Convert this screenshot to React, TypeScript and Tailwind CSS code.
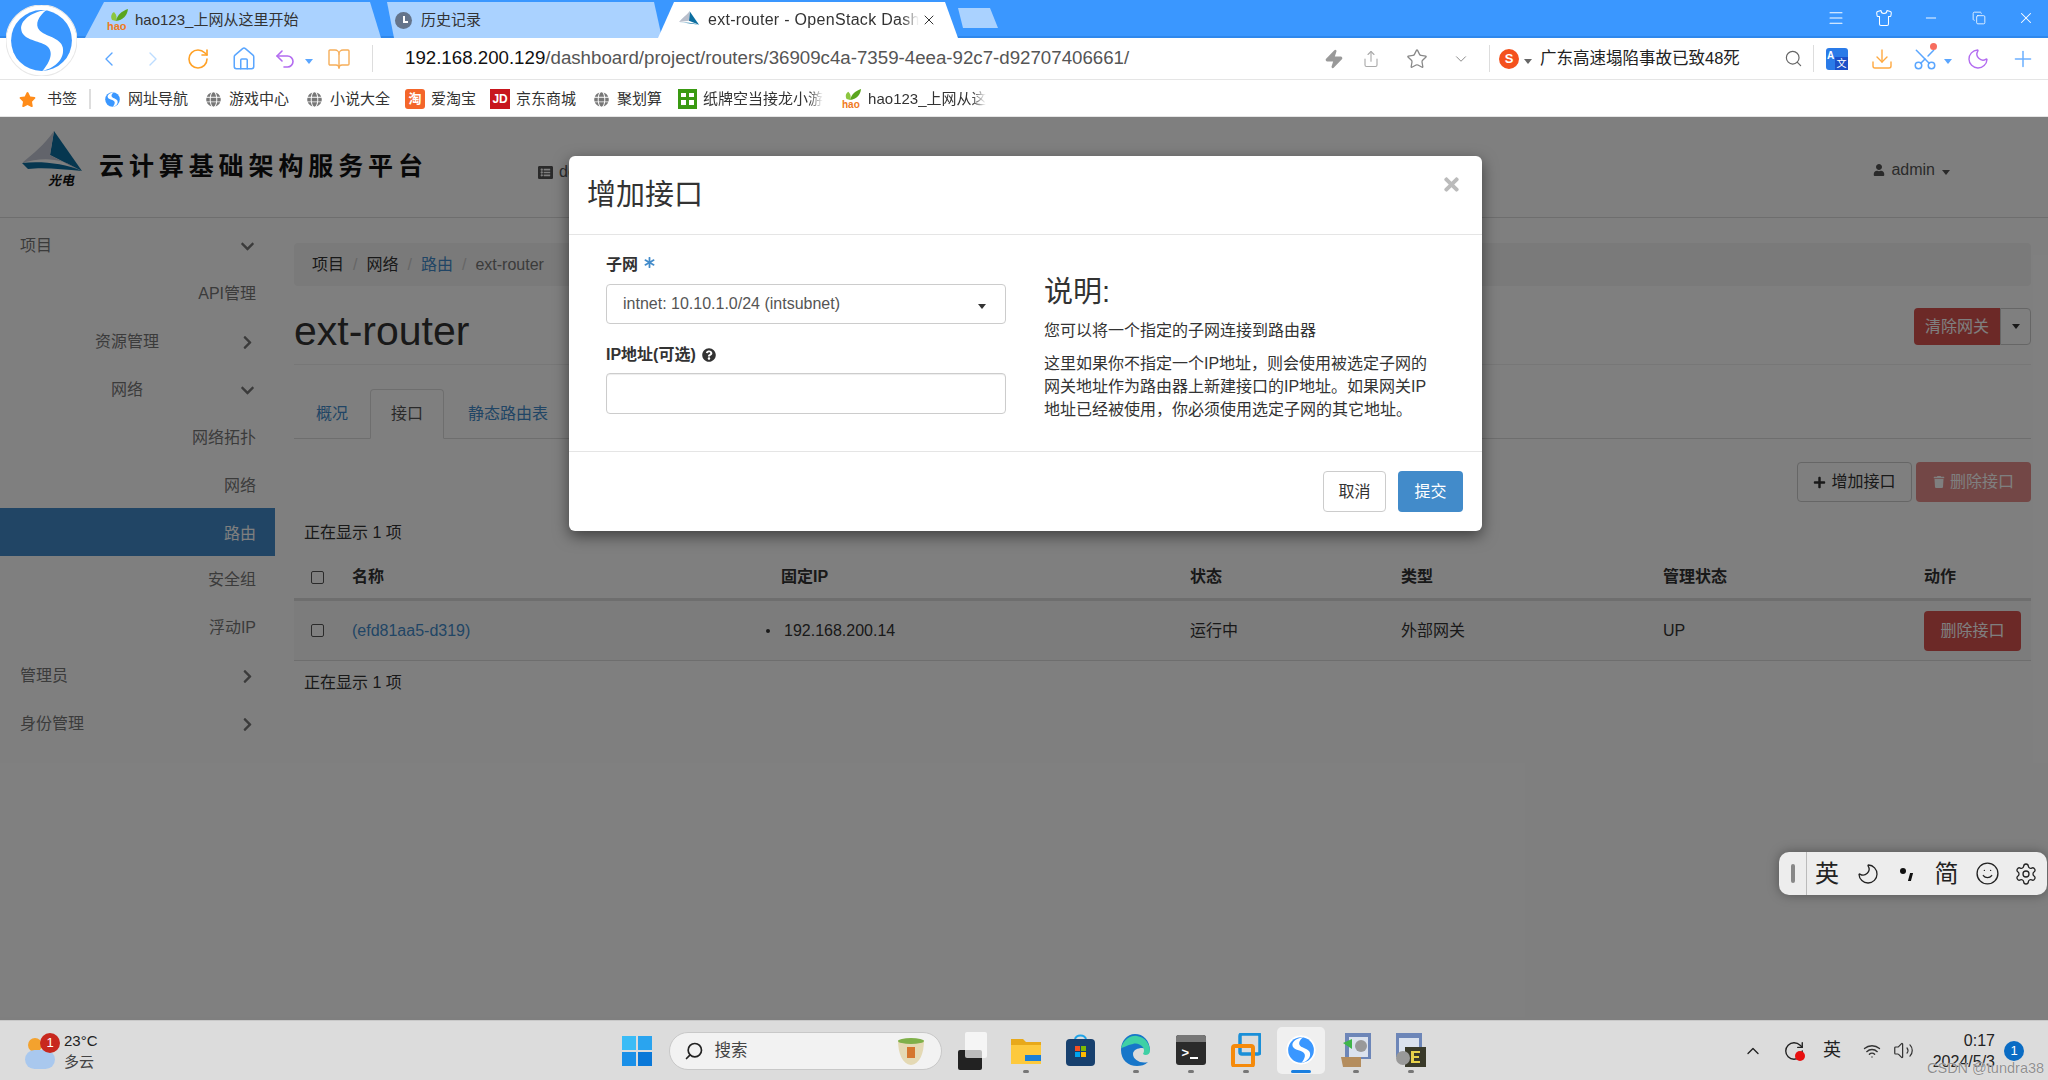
import { ReactNode } from "react";
import {
  FaAsterisk, FaChevronDown, FaChevronRight, FaGlobe, FaListAlt, FaPlus, FaQuestionCircle,
  FaStar, FaTimes, FaTrash, FaUser,
} from "react-icons/fa";
import {
  ChevronDown, ChevronLeft, ChevronRight, ChevronUp, Download, Home, Menu, Minus, Moon, Plus,
  RotateCw, Scissors, Search, Settings, Share, Shirt, Smile, Star, Undo2, Volume2, Wifi, X, Zap, BookOpen, Copy,
} from "lucide-react";

function SogouLogo({ size, ring }: { size: number; ring?: boolean }) {
  return (
    <svg width={size} height={size} viewBox="0 0 70 70">
      {ring && <circle cx="35" cy="35" r="35" fill="#fff" stroke="#e8e8e8" />}
      <circle cx="35" cy="35" r="30" fill="#3a97ff" />
      <path d="M40 5 C24 7 14 16 15 24 C16 34 30 35 38 39 C46 43 47 52 36 65 C50 62 58 52 56 42 C54 32 38 31 33 25 C28 19 32 11 40 5Z" fill="#fff" />
    </svg>
  );
}

function HaoIcon() {
  return (
    <svg width="22" height="24" viewBox="0 0 22 24">
      <path d="M5 12 C3 8 5 5 7 4 C10 7 10 10 9 13Z" fill="#8cc63f" />
      <path d="M9 13 C10 7 15 3 21 1 C20 8 16 12 9 13Z" fill="#5aa51e" />
      <text x="0" y="22" fontSize="11" fontWeight="700" fill="#f07a22" fontFamily="Liberation Sans">hao</text>
    </svg>
  );
}

function OpenStackIcon() {
  return (
    <svg width="20" height="22" viewBox="0 0 60 52">
      <path d="M32 0 L60 40 L30 28Z" fill="#0c6ea0" />
      <path d="M32 0 L30 28 L0 32 C8 22 20 14 32 0Z" fill="#b9bfcc" />
      <path d="M0 32 L60 40 C40 34 20 34 0 32Z" fill="#0c6ea0" />
    </svg>
  );
}

function Mark({ w, children }: { w: number; children: ReactNode }) {
  return <div className="flex shrink-0 items-center justify-center" style={{ width: w }}>{children}</div>;
}

function Caret({ color = "#666" }: { color?: string }) {
  return <span className="inline-block h-0 w-0 border-x-[4px] border-t-[5px] border-x-transparent" style={{ borderTopColor: color }} />;
}

function Bookmark({ icon, text, w, fade }: { icon: ReactNode; text: string; w?: number; fade?: boolean }) {
  return (
    <div className="flex items-center">
      <Mark w={20}>{icon}</Mark>
      <span
        className={`ml-[6px] whitespace-nowrap text-[15px] text-[#333] ${fade ? "[mask-image:linear-gradient(90deg,#000_88%,transparent)]" : ""}`}
        style={w ? { width: w } : undefined}
      >
        {text}
      </span>
    </div>
  );
}

function Tabs() {
  return (
    <div className="relative flex h-[38px] shrink-0 bg-[#3a97ff]">
      <div className="absolute inset-x-0 bottom-0 h-[2px] bg-[#2f88ec]" />
      <div className="relative ml-[85px] mt-[2px] flex h-[36px] w-[296px] items-center bg-[#aad2ff] pl-[22px] [clip-path:polygon(19px_0,285px_0,100%_100%,0_100%)]">
        <HaoIcon />
        <span className="ml-[6px] whitespace-nowrap text-[15px] text-[#333]">hao123_上网从这里开始</span>
      </div>
      <div className="relative ml-[6px] mt-[2px] flex h-[36px] w-[275px] items-center bg-[#aad2ff] pl-[8px] [clip-path:polygon(0_0,267px_0,100%_100%,7px_100%)]">
        <div className="flex h-[17px] w-[17px] items-center justify-center rounded-full bg-[#64748b]">
          <span className="mb-[2px] ml-[3px] h-[7px] w-[5px] border-b-2 border-l-2 border-white" />
        </div>
        <span className="ml-[9px] text-[15px] text-[#333]">历史记录</span>
      </div>
      <div className="relative -ml-[4px] mt-[2px] flex h-[36px] w-[300px] items-center bg-white pl-[21px] [clip-path:polygon(16px_0,287px_0,100%_100%,0_100%)]">
        <OpenStackIcon />
        <span className="ml-[9px] w-[211px] whitespace-nowrap text-[16px] tracking-[0.3px] text-[#333] [mask-image:linear-gradient(90deg,#000_92%,transparent)]">ext-router - OpenStack Dash</span>
        <X size={16} strokeWidth={1.5} className="ml-[2px] text-[#333]" />
      </div>
      <div className="relative mt-[8px] h-[20px] w-[40px] bg-[#aad2ff] [clip-path:polygon(0_0,32px_0,100%_100%,5px_100%)]" />
      <div className="relative -mr-[2px] ml-auto flex h-[36px] items-center text-white">
        <div className="flex w-[47.5px] justify-center"><Menu size={18} strokeWidth={1.4} /></div>
        <div className="flex w-[47.5px] justify-center"><Shirt size={18} strokeWidth={1.4} /></div>
        <div className="flex w-[47.5px] justify-center"><Minus size={16} strokeWidth={1.4} /></div>
        <div className="flex w-[47.5px] justify-center"><Copy size={14} strokeWidth={1.4} /></div>
        <div className="flex w-[47.5px] justify-center"><X size={18} strokeWidth={1.4} /></div>
      </div>
    </div>
  );
}

function Toolbar() {
  return (
    <div className="flex h-[42px] shrink-0 items-center border-b border-[#e5e5e5] bg-white pl-[97px]">
      <Mark w={24}><ChevronLeft size={24} strokeWidth={1.4} className="text-[#5aa6ff]" /></Mark>
      <div className="ml-[20px]"><Mark w={24}><ChevronRight size={24} strokeWidth={1.4} className="text-[#bcdcff]" /></Mark></div>
      <div className="ml-[21px]"><RotateCw size={24} strokeWidth={1.6} className="text-[#ffa126]" /></div>
      <div className="ml-[21px]"><Home size={26} strokeWidth={1.4} className="text-[#5aa6ff]" /></div>
      <div className="ml-[16px]"><Undo2 size={24} strokeWidth={1.6} className="text-[#b36cf0]" /></div>
      <div className="ml-[8px]"><Caret color="#5aa6ff" /></div>
      <div className="ml-[14px]"><BookOpen size={24} strokeWidth={1.4} className="text-[#f6ae5a]" /></div>
      <div className="ml-[21px] h-[27px] w-px bg-[#ddd]" />
      <div className="ml-[32px] w-[917px] whitespace-nowrap text-[18.7px] text-[#555]">
        <span className="text-[#111]">192.168.200.129</span>/dashboard/project/routers/36909c4a-7359-4eea-92c7-d92707406661/
      </div>
      <Zap size={20} className="ml-[2px] fill-[#999] text-[#999]" />
      <Share size={18} strokeWidth={1.5} className="ml-[18px] text-[#aaa]" />
      <Star size={22} strokeWidth={1.4} className="ml-[26px] text-[#888]" />
      <ChevronDown size={18} strokeWidth={1.3} className="ml-[24px] text-[#888]" />
      <div className="ml-[19px] h-[27px] w-px bg-[#ddd]" />
      <div className="ml-[9px] flex h-[20px] w-[20px] items-center justify-center rounded-full border-2 border-[#f4511e] bg-[#f4511e] text-[13px] font-bold text-white">S</div>
      <div className="ml-[5px]"><Caret /></div>
      <span className="ml-[8px] w-[244px] text-[16.5px] text-[#222]">广东高速塌陷事故已致48死</span>
      <Search size={19} strokeWidth={1.5} className="text-[#666]" />
      <div className="ml-[10px] h-[27px] w-px bg-[#ddd]" />
      <div className="relative ml-[12px] h-[22px] w-[22px] rounded-[3px] bg-[#2a7be8]">
        <span className="absolute left-[1px] top-0 text-[10px] font-bold text-white">A</span>
        <span className="absolute bottom-0 right-0 h-[13px] w-[13px] bg-[#1c50c8] text-center text-[10px] leading-[13px] text-white">文</span>
      </div>
      <Download size={24} strokeWidth={1.4} className="ml-[22px] text-[#ffa940]" />
      <div className="relative ml-[18px]">
        <Scissors size={26} strokeWidth={1.4} className="-rotate-90 text-[#5aa6ff]" />
        <span className="absolute -top-[3px] right-[1px] h-[7px] w-[7px] rounded-full bg-[#f76d5e]" />
      </div>
      <div className="ml-[6px]"><Caret color="#5aa6ff" /></div>
      <Moon size={24} strokeWidth={1.4} className="ml-[14px] text-[#b36cf0]" />
      <Plus size={26} strokeWidth={1.4} className="ml-[20px] text-[#6cb0ff]" />
    </div>
  );
}

function Bookmarks() {
  const globe = <FaGlobe size={15} className="text-[#777]" />;
  return (
    <div className="flex h-[37px] shrink-0 items-center gap-[5px] border-b border-[#e5e5e5] bg-white pl-[19px] pt-[2px]">
      <FaStar size={17} className="text-[#ff8c1a]" />
      <span className="ml-[6px] text-[15px] text-[#333]">书签</span>
      <div className="ml-[7px] h-[20px] w-[2px] bg-[#ddd]" />
      <div className="ml-[6px]"><Bookmark icon={<SogouLogo size={17} />} text="网址导航" /></div>
      <div className="ml-[10px]"><Bookmark icon={globe} text="游戏中心" /></div>
      <div className="ml-[10px]"><Bookmark icon={globe} text="小说大全" /></div>
      <div className="ml-[10px]">
        <Bookmark icon={<span className="flex h-[20px] w-[20px] items-center justify-center rounded-[3px] bg-[#f4662a] text-[13px] font-bold text-white">淘</span>} text="爱淘宝" />
      </div>
      <div className="ml-[9px]">
        <Bookmark icon={<span className="flex h-[20px] w-[20px] items-center justify-center bg-[#c8161d] text-[12px] font-bold text-white">JD</span>} text="京东商城" />
      </div>
      <div className="ml-[10px]"><Bookmark icon={globe} text="聚划算" /></div>
      <div className="ml-[10px]">
        <Bookmark
          icon={<svg width="19" height="20" viewBox="0 0 19 20"><rect width="19" height="20" fill="#3a9a12" /><path d="M3 4h5v4H3zM11 4h5v4h-5zM3 11h5v5H3zM11 11h5v5h-5z" fill="#fff" /></svg>}
          text="纸牌空当接龙小游"
          w={120}
          fade
        />
      </div>
      <div className="ml-[14px]"><Bookmark icon={<HaoIcon />} text="hao123_上网从这" w={118} fade /></div>
    </div>
  );
}

function SideRow({ text, kind, open, active, low }: { text: string; kind: "top" | "mid" | "net" | "sub"; open?: boolean; active?: boolean; low?: boolean }) {
  const inset = kind === "sub" ? "justify-end pr-[19px]" : kind === "top" ? "pl-[20px]" : kind === "net" ? "pl-[111px]" : "pl-[95px]";
  return (
    <div className={`relative flex h-[48px] items-center text-[16px] ${low ? "pt-[4px]" : ""} ${active ? "bg-[#428bca] text-white" : "text-[#777]"} ${inset}`}>
      <span>{text}</span>
      {kind !== "sub" && (
        <span className="absolute left-[240px] text-[#777]">
          {open ? <FaChevronDown size={15} /> : <FaChevronRight size={15} />}
        </span>
      )}
    </div>
  );
}

function Sidebar() {
  return (
    <div className="w-[275px] shrink-0 pt-[2px]">
      <SideRow text="项目" kind="top" open low />
      <SideRow text="API管理" kind="sub" low />
      <SideRow text="资源管理" kind="mid" low />
      <SideRow text="网络" kind="net" open low />
      <SideRow text="网络拓扑" kind="sub" low />
      <SideRow text="网络" kind="sub" low />
      <SideRow text="路由" kind="sub" active low />
      <SideRow text="安全组" kind="sub" />
      <SideRow text="浮动IP" kind="sub" />
      <SideRow text="管理员" kind="top" />
      <SideRow text="身份管理" kind="top" />
    </div>
  );
}

function Check() {
  return <span className="block h-[13px] w-[13px] rounded-[2px] border border-[#555] bg-white" />;
}

const tableCols = "grid grid-cols-[48px_429px_409px_211px_262px_261px_117px]";

function Content() {
  return (
    <div className="ml-[19px] w-[1737px] text-[16px] text-[#333]">
      <div className="mt-[25px] flex h-[43px] items-center rounded-[4px] bg-[#f5f5f5] pl-[18px]">
        <span>项目</span><span className="mx-[9px] text-[#ccc]">/</span>
        <span>网络</span><span className="mx-[9px] text-[#ccc]">/</span>
        <span className="text-[#428bca]">路由</span><span className="mx-[9px] text-[#ccc]">/</span>
        <span className="text-[#777]">ext-router</span>
      </div>
      <div className="mt-[20px] flex h-[59px] justify-between border-b border-[#eee]">
        <h1 className="h-[50px] text-[41px] leading-[50px] text-[#333]">ext-router</h1>
        <div className="mt-[2px] flex h-[37px]">
          <div className="flex w-[86px] items-center justify-center rounded-l-[4px] bg-[#d9534f] text-white">清除网关</div>
          <div className="flex w-[31px] items-center justify-center rounded-r-[4px] border border-[#ccc] bg-white"><Caret color="#333" /></div>
        </div>
      </div>
      <div className="mt-[24px] flex h-[50px] border-b border-[#ddd] text-[#428bca]">
        <div className="flex h-[50px] w-[76px] items-center justify-center">概况</div>
        <div className="flex h-[50px] w-[74px] items-center justify-center rounded-t-[4px] border border-b-white border-[#ddd] bg-white text-[#555]">接口</div>
        <div className="flex h-[50px] w-[128px] items-center justify-center">静态路由表</div>
      </div>
      <div className="mt-[23px] flex h-[40px] justify-end gap-[4px]">
        <div className="flex w-[115px] items-center justify-center gap-[5px] rounded-[4px] border border-[#ccc] bg-white"><FaPlus size={13} />增加接口</div>
        <div className="flex w-[115px] items-center justify-center gap-[5px] rounded-[4px] bg-[#d9534f]/65 text-white"><FaTrash size={12} />删除接口</div>
      </div>
      <div className="mt-[20px] h-[22px] pl-[10px] leading-[22px]">正在显示 1 项</div>
      <div className={`${tableCols} mt-[12px] h-[45px] items-center border-b-[3px] border-[#ddd] font-bold`}>
        <div className="pl-[17px]"><Check /></div>
        <div className="pl-[10px]">名称</div>
        <div className="pl-[10px]">固定IP</div>
        <div className="pl-[10px]">状态</div>
        <div className="pl-[10px]">类型</div>
        <div className="pl-[10px]">管理状态</div>
        <div className="pl-[10px]">动作</div>
      </div>
      <div className={`${tableCols} h-[60px] items-center border-b border-[#ddd] bg-[#f9f9f9]`}>
        <div className="pl-[17px]"><Check /></div>
        <div className="pl-[10px] text-[#428bca]">(efd81aa5-d319)</div>
        <div className="flex items-center"><span className="-ml-[5px] mr-[14px] h-[4px] w-[4px] rounded-full bg-[#333]" />192.168.200.14</div>
        <div className="pl-[10px]">运行中</div>
        <div className="pl-[10px]">外部网关</div>
        <div className="pl-[10px]">UP</div>
        <div className="pl-[10px]"><div className="flex h-[40px] w-[97px] items-center justify-center rounded-[4px] bg-[#d9534f] text-white">删除接口</div></div>
      </div>
      <div className="mt-[11px] h-[22px] pl-[10px] leading-[22px]">正在显示 1 项</div>
    </div>
  );
}

function Modal() {
  return (
    <div className="absolute inset-0 bg-black/50">
      <div className="ml-[569px] mt-[39px] w-[913px] rounded-[6px] bg-white text-[#333] shadow-[0_5px_15px_rgba(0,0,0,0.5)]">
        <div className="relative flex h-[79px] items-center border-b border-[#e5e5e5] pl-[18px] pt-[2px]">
          <h3 className="text-[29px]">增加接口</h3>
          <FaTimes size={21} className="absolute right-[20px] top-[18px] text-[#bbb]" />
        </div>
        <div className="flex h-[216px] text-[16px]">
          <div className="ml-[37px] w-[400px] pt-[19px]">
            <div className="flex h-[22px] items-center font-bold">
              子网<FaAsterisk size={11} className="mb-[6px] ml-[6px] text-[#428bca]" />
            </div>
            <div className="relative mt-[8px] flex h-[40px] items-center rounded-[4px] border border-[#ccc] bg-white pl-[16px] text-[#555]">
              intnet: 10.10.1.0/24 (intsubnet)
              <span className="absolute right-[19px]"><Caret color="#333" /></span>
            </div>
            <div className="mt-[20px] flex h-[22px] items-center font-bold">
              IP地址(可选)<FaQuestionCircle size={14} className="ml-[6px]" />
            </div>
            <div className="mt-[7px] h-[41px] rounded-[4px] border border-[#ccc] bg-white shadow-[inset_0_1px_1px_rgba(0,0,0,0.075)]" />
          </div>
          <div className="ml-[38px] pt-[39px]">
            <h3 className="h-[36px] text-[29px] leading-[36px]">说明:</h3>
            <p className="mt-[10px] leading-[22px]">您可以将一个指定的子网连接到路由器</p>
            <p className="mt-[10px] leading-[23px]">
              这里如果你不指定一个IP地址，则会使用被选定子网的<br />
              网关地址作为路由器上新建接口的IP地址。如果网关IP<br />
              地址已经被使用，你必须使用选定子网的其它地址。
            </p>
          </div>
        </div>
        <div className="flex h-[80px] items-start justify-end gap-[12px] border-t border-[#e5e5e5] pr-[19px] pt-[19px]">
          <div className="flex h-[41px] w-[63px] items-center justify-center rounded-[4px] border border-[#ccc] bg-white">取消</div>
          <div className="flex h-[41px] w-[65px] items-center justify-center rounded-[4px] bg-[#428bca] text-white">提交</div>
        </div>
      </div>
    </div>
  );
}

function Page() {
  return (
    <div className="relative flex-1 overflow-hidden bg-white">
      <div className="flex h-[101px] border-b border-[#ddd]">
        <div className="relative ml-[22px] mt-[14px] h-[58px] w-[62px]">
          <svg width="62" height="46" viewBox="0 0 62 46">
            <path d="M32 0 L60 40 L28 24Z" fill="#0c6ea0" />
            <path d="M32 0 L28 24 L58 40 C40 26 20 26 0 32 C12 22 22 14 32 0Z" fill="#c4c9d6" />
            <path d="M0 32 C18 30 42 32 60 40 C40 38 20 36 6 38Z" fill="#0c6ea0" />
          </svg>
          <span className="absolute left-[26px] top-[40px] whitespace-nowrap text-[13px] font-bold italic text-[#111]">光电</span>
        </div>
        <div className="ml-[15px] mt-[31px] whitespace-nowrap text-[25px] font-bold tracking-[4.9px] text-[#111]">云计算基础架构服务平台</div>
        <div className="ml-auto mr-[98px] mt-[42px] flex h-[22px] items-center gap-[6px] text-[16px] text-[#555]">
          <FaUser size={12} />admin<span className="ml-[1px]"><Caret color="#555" /></span>
        </div>
      </div>
      <div className="absolute left-[538px] top-[43px] flex items-center gap-[6px] text-[16px] text-[#555]"><FaListAlt size={15} />demo</div>
      <div className="flex">
        <Sidebar />
        <Content />
      </div>
      <Modal />
    </div>
  );
}

function Dot({ active }: { active?: boolean }) {
  return active
    ? <span className="mt-[4px] h-[3px] w-[20px] rounded-full bg-[#1a7fe0]" />
    : <span className="mt-[4px] h-[3px] w-[6px] rounded-full bg-[#777]" />;
}

function TaskApp({ children, dot, active, ml }: { children: ReactNode; dot?: boolean; active?: boolean; ml: string }) {
  return (
    <div className={`${ml} flex h-[47px] w-[48px] flex-col items-center justify-end rounded-[5px] pb-[1px] ${active ? "bg-[#f0f0f0]" : ""}`}>
      <div className="flex h-[32px] items-center">{children}</div>
      {dot ? <Dot active={active} /> : <span className="mt-[4px] h-[3px]" />}
    </div>
  );
}

function Taskbar() {
  return (
    <div className="relative flex h-[60px] shrink-0 items-center border-t border-[#c9c9c9] bg-[#dcdcdc]">
      <div className="relative ml-[25px] h-[36px] w-[32px]">
        <span className="absolute left-[3px] top-[5px] h-[14px] w-[14px] rounded-full bg-[#f3a22e]" />
        <span className="absolute bottom-0 left-0 h-[19px] w-[30px] rounded-full bg-[#a9c8ee]" />
        <span className="absolute left-[15px] top-0 flex h-[20px] w-[20px] items-center justify-center rounded-full bg-[#c8281e] text-[13px] text-white">1</span>
      </div>
      <div className="ml-[7px] text-[15px] leading-[21px] text-[#222]">
        <div>23°C</div>
        <div className="text-[#444]">多云</div>
      </div>
      <svg className="ml-[524px]" width="30" height="30" viewBox="0 0 30 30">
        <path d="M0 0h14v14H0z" fill="#3bbcf6" /><path d="M16 0h14v14H16z" fill="#2aa4ef" />
        <path d="M0 16h14v14H0z" fill="#1a90e8" /><path d="M16 16h14v14H16z" fill="#0a78d8" />
      </svg>
      <div className="ml-[17px] flex h-[38px] w-[273px] items-center rounded-full border border-[#c8c8c8] bg-[#f2f2f2] pl-[14px]">
        <Search size={20} strokeWidth={2} className="-scale-x-100 text-[#222]" />
        <span className="ml-[11px] w-[180px] text-[16.5px] text-[#444]">搜索</span>
        <svg width="32" height="32" viewBox="0 0 32 32">
          <path d="M3 5 H29 C29 18 25 29 16 30 C7 29 3 18 3 5Z" fill="#e4d9b4" />
          <ellipse cx="16" cy="6" rx="13" ry="3" fill="#7fb04a" />
          <rect x="12" y="12" width="8" height="11" fill="#d5762e" />
        </svg>
      </div>
      <div className="relative ml-[16px] h-[38px] w-[24px]">
        <span className="absolute bottom-0 left-0 h-[20px] w-[24px] rounded-[2px] bg-[#222]" />
        <span className="absolute left-[7px] top-0 h-[26px] w-[22px] rounded-[2px] bg-white/70" />
      </div>
      <TaskApp ml="ml-[20px]" dot>
        <svg width="30" height="28" viewBox="0 0 30 28"><path d="M0 3h12l3 3h15v6H0z" fill="#e8a91a" /><path d="M0 9h30v19H0z" fill="#fdc93d" /><rect x="14" y="19" width="16" height="6" fill="#1a7fd8" /></svg>
      </TaskApp>
      <TaskApp ml="ml-[7px]">
        <svg width="29" height="32" viewBox="0 0 29 32"><path d="M9 6 C9 0 20 0 20 6" fill="none" stroke="#1fa3e8" strokeWidth="2" /><rect y="5" width="29" height="27" rx="4" fill="#17406e" /><path d="M9 12h5v5H9z" fill="#f25022" /><path d="M15 12h5v5h-5z" fill="#7fba00" /><path d="M9 18h5v5H9z" fill="#00a4ef" /><path d="M15 18h5v5h-5z" fill="#ffb900" /></svg>
      </TaskApp>
      <TaskApp ml="ml-[7px]" dot>
        <svg width="30" height="32" viewBox="0 0 30 32"><path d="M29 17 C29 6 22 0 14 0 C6 0 0 7 0 16 C0 26 7 32 16 32 C20 32 24 31 27 28 C20 30 12 26 12 20 C12 16 17 14 21 14 C26 14 29 17 29 17Z" fill="#1776c9" /><path d="M0 14 C3 5 10 1 16 2 C24 3 29 10 29 17 C29 21 24 22 22 20 C26 14 18 8 12 10 C6 11 2 14 0 14Z" fill="#3fd0a5" /></svg>
      </TaskApp>
      <TaskApp ml="ml-[7px]" dot>
        <div className="relative h-[30px] w-[30px] rounded-[3px] bg-[#2b2b2b]">
          <span className="absolute inset-x-0 top-0 h-[7px] rounded-t-[3px] bg-[#777]" />
          <span className="absolute left-[6px] top-[11px] text-[13px] font-bold leading-[13px] text-white">&gt;</span>
          <span className="absolute left-[14px] top-[22px] h-[2px] w-[8px] bg-white" />
        </div>
      </TaskApp>
      <TaskApp ml="ml-[7px]" dot>
        <svg width="30" height="34" viewBox="0 0 30 34"><rect x="9" y="1" width="20" height="20" rx="2" fill="none" stroke="#1a8fd8" strokeWidth="3.5" /><rect x="2" y="13" width="20" height="20" rx="2" fill="none" stroke="#f58a0b" strokeWidth="4" /></svg>
      </TaskApp>
      <TaskApp ml="ml-[7px]" dot active><SogouLogo size={30} ring /></TaskApp>
      <TaskApp ml="ml-[7px]" dot>
        <svg width="30" height="34" viewBox="0 0 30 34"><rect x="4" y="0" width="26" height="26" fill="#6d86b8" /><rect x="8" y="4" width="19" height="20" fill="#dbe2ee" /><circle cx="20" cy="13" r="6" fill="#999" /><path d="M2 10l9-4v10z" fill="#3fb54a" /><path d="M0 24h20v10H2z" fill="#b48d5e" /></svg>
      </TaskApp>
      <TaskApp ml="ml-[7px]" dot>
        <svg width="30" height="34" viewBox="0 0 30 34"><rect width="26" height="24" fill="#6d86b8" /><rect x="3" y="5" width="20" height="16" fill="#dbe2ee" /><rect x="9" y="14" width="21" height="20" fill="#3a3a2a" /><path d="M15 18h9v2h-6v3h5v2h-5v3h6v2h-9z" fill="#e8d24a" /><circle cx="7" cy="25" r="7" fill="#999" /></svg>
      </TaskApp>
      <ChevronUp size={20} strokeWidth={1.6} className="absolute left-[1743px] text-[#222]" />
      <div className="absolute left-[1783px]">
        <RotateCw size={22} strokeWidth={1.5} className="text-[#222]" />
        <span className="absolute bottom-[1px] right-[0px] h-[10px] w-[10px] rounded-full bg-[#e81010]" />
      </div>
      <span className="absolute left-[1823px] text-[18px] text-[#222]">英</span>
      <Wifi size={18} strokeWidth={1.8} className="absolute left-[1863px] text-[#333]" />
      <Volume2 size={21} strokeWidth={1.4} className="absolute left-[1893px] text-[#333]" />
      <div className="absolute left-[1932px] w-[63px] text-right text-[16px] leading-[21px] text-[#222]">
        <div>0:17</div>
        <div>2024/5/3</div>
      </div>
      <span className="absolute left-[2004px] flex h-[20px] w-[20px] items-center justify-center rounded-full bg-[#0a6cc4] text-[13px] text-white">1</span>
      <span className="absolute left-[1927px] top-[37px] whitespace-nowrap text-[14.5px] text-[#8f8f8f] [text-shadow:0_0_1px_#fff]">CSDN @tundra38</span>
    </div>
  );
}

function ImeBar() {
  return (
    <div className="absolute left-[1779px] top-[852px] flex h-[43px] w-[268px] items-center rounded-[10px] bg-[#ededed] text-[#222] shadow-[0_0_12px_rgba(0,0,0,0.35)]">
      <div className="flex h-full w-[30px] items-center justify-center border-r border-[#bbb]">
        <span className="h-[19px] w-[4px] rounded-full bg-[#888]" />
      </div>
      <Mark w={40}><span className="text-[24px]">英</span></Mark>
      <Mark w={41}><Moon size={24} strokeWidth={1.3} className="-scale-x-100" /></Mark>
      <Mark w={36}><span className="flex items-center gap-[3px]"><span className="mb-[6px] h-[6px] w-[6px] rounded-full bg-[#111]" /><span className="mt-[6px] h-[8px] w-[3px] skew-x-[-15deg] bg-[#111]" /></span></Mark>
      <Mark w={45}><span className="text-[24px]">简</span></Mark>
      <Mark w={36}><Smile size={25} strokeWidth={1.3} /></Mark>
      <Mark w={42}><Settings size={24} strokeWidth={1.3} /></Mark>
    </div>
  );
}

function App() {
  return (
    <div className="relative flex h-[1080px] w-[2048px] flex-col overflow-hidden bg-white [font-family:'Liberation_Sans','Noto_Sans_CJK_SC',sans-serif]">
      <Tabs />
      <Toolbar />
      <Bookmarks />
      <Page />
      <Taskbar />
      <div className="absolute left-[6px] top-[5px]"><SogouLogo size={71} ring /></div>
      <ImeBar />
    </div>
  );
}

export default App;
